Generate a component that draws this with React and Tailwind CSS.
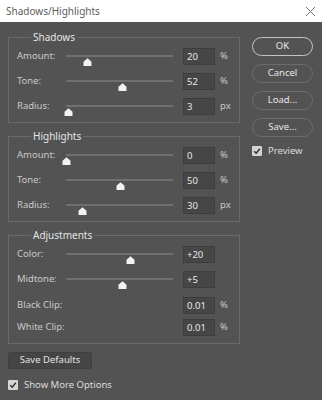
import React from 'react';

const font = { fontFamily: '"Noto Sans", "Open Sans", Arial, sans-serif' };

// slider thumb positions are fractions of the track
const groups = [
  {
    title: 'Shadows',
    rows: [
      { label: 'Amount:', value: '20', unit: '%', pos: 0.2 },
      { label: 'Tone:', value: '52', unit: '%', pos: 0.52 },
      { label: 'Radius:', value: '3', unit: 'px', pos: 0.02 },
    ],
  },
  {
    title: 'Highlights',
    rows: [
      { label: 'Amount:', value: '0', unit: '%', pos: 0 },
      { label: 'Tone:', value: '50', unit: '%', pos: 0.5 },
      { label: 'Radius:', value: '30', unit: 'px', pos: 0.15 },
    ],
  },
];

function Thumb() {
  return (
    <svg width="9" height="8" viewBox="0 0 9 8" className="block">
      <path d="M0.5 8 V3.8 L4.5 0.3 L8.5 3.8 V8 Z" fill="#f2f2f2" />
    </svg>
  );
}

function Slider({ pos }) {
  return (
    <div className="relative w-[107px] h-[17px] shrink-0">
      <div className="absolute left-0 right-0 top-[7px] h-[2px] bg-[#707070]" />
      <div className="absolute top-[10px] -ml-[4px]" style={{ left: `${pos * 107}px` }}>
        <Thumb />
      </div>
    </div>
  );
}

function ValueBox({ value }) {
  return (
    <div className="w-[32px] h-[17px] bg-[#464646] border border-[#3d3d3d] text-[#e6e6e6] text-[9.5px] leading-[15px] pl-[3px]">
      {value}
    </div>
  );
}

function Row({ label, value, unit, pos }) {
  return (
    <div className="flex items-center h-[17px]">
      <div className="w-[49px] text-[9.5px] text-[#c9c9c9] shrink-0 whitespace-nowrap">{label}</div>
      {pos !== undefined ? <Slider pos={pos} /> : <div className="w-[107px] shrink-0" />}
      <div className="ml-[10px]">
        <ValueBox value={value} />
      </div>
      {unit && <div className="ml-[5px] text-[9.5px] text-[#c9c9c9]">{unit}</div>}
    </div>
  );
}

function Group({ title, children, className = '' }) {
  return (
    <fieldset className={'border border-[#6a6a6a] pl-[8px] pr-[8px] ' + className}>
      <legend className="ml-[14px] px-[2px] text-[10px] leading-[14px] text-[#e4e4e4]">{title}</legend>
      {children}
    </fieldset>
  );
}

function Check({ label }) {
  return (
    <div className="flex items-center gap-[6px]">
      <div className="w-[10px] h-[10px] bg-[#d4d4d4] rounded-[1px] flex items-center justify-center">
        <svg width="8" height="8" viewBox="0 0 8 8">
          <path d="M1.2 4.2 L3.2 6.2 L6.8 1.8" stroke="#333" strokeWidth="1.5" fill="none" />
        </svg>
      </div>
      <span className="text-[9.5px] text-[#dcdcdc]">{label}</span>
    </div>
  );
}

function PillButton({ children, primary }) {
  return (
    <div
      className={
        'h-[19px] w-[61px] rounded-full flex items-center justify-center text-[9.5px] text-[#e8e8e8] ' +
        (primary ? 'border-[1.5px] border-[#c4c4c4]' : 'border border-[#6c6c6c]')
      }
    >
      {children}
    </div>
  );
}

export default function App() {
  return (
    <div className="w-[322px] h-[400px] bg-[#535353] overflow-hidden" style={font}>
      <div className="h-[22px] bg-white flex items-center justify-between pl-[6px] pr-[6px]">
        <span className="text-[10px] text-[#5c5c5c]">Shadows/Highlights</span>
        <svg width="11" height="11" viewBox="0 0 11 11">
          <path d="M1 1 L10 10 M10 1 L1 10" stroke="#777" strokeWidth="1" />
        </svg>
      </div>

      <div className="flex pl-[8px]">
        <div className="w-[232px] pt-[8px]">
          {groups.map((g, i) => (
            <Group key={g.title} title={g.title} className={i > 0 ? 'mt-[6px] pb-[7px]' : 'pb-[7px]'}>
              <div className="flex flex-col gap-[8px] mt-[4px]">
                {g.rows.map((r) => (
                  <Row key={r.label} {...r} />
                ))}
              </div>
            </Group>
          ))}

          <Group title="Adjustments" className="mt-[6px] pb-[7px]">
            <div className="flex flex-col mt-[4px]">
              <Row label="Color:" value="+20" pos={0.6} />
              <div className="mt-[8px]">
                <Row label="Midtone:" value="+5" pos={0.525} />
              </div>
              <div className="mt-[9px]">
                <Row label="Black Clip:" value="0.01" unit="%" />
              </div>
              <div className="mt-[5px]">
                <Row label="White Clip:" value="0.01" unit="%" />
              </div>
            </div>
          </Group>

          <div className="mt-[8px] w-[84px] h-[17px] bg-[#454545] border border-[#3f3f3f] rounded-[2px] flex items-center justify-center text-[9.5px] text-[#e4e4e4]">
            Save Defaults
          </div>
          <div className="mt-[9px]">
            <Check label="Show More Options" />
          </div>
        </div>

        <div className="ml-[12px] pt-[15px] flex flex-col gap-[8px]">
          <PillButton primary>OK</PillButton>
          <PillButton>Cancel</PillButton>
          <PillButton>Load...</PillButton>
          <PillButton>Save...</PillButton>
          <div className="-mt-[1px]">
            <Check label="Preview" />
          </div>
        </div>
      </div>
    </div>
  );
}
